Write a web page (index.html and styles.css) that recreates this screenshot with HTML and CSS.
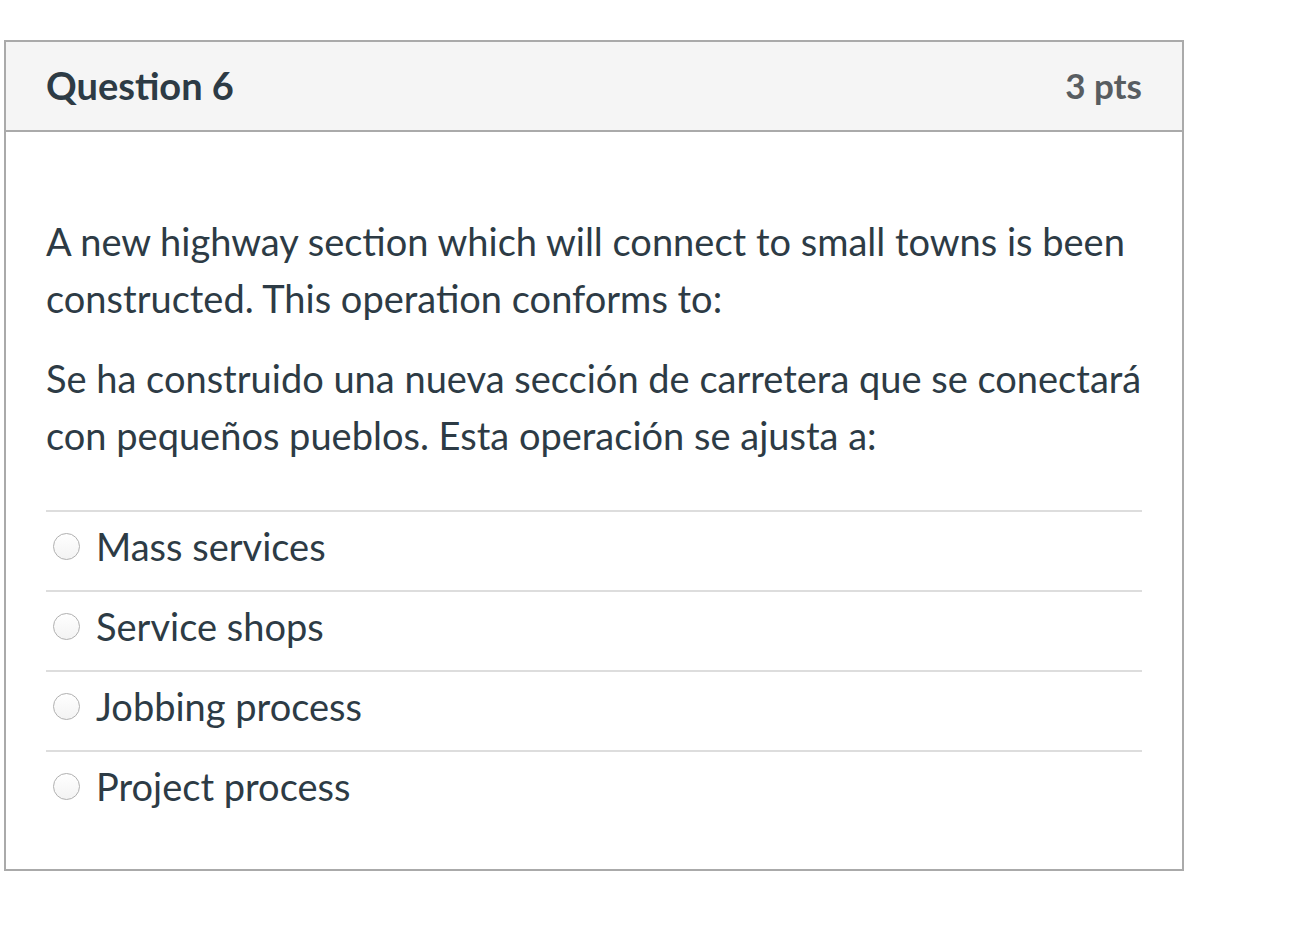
FILE: index.html
```html
<!DOCTYPE html>
<html lang="en">
<head>
<meta charset="utf-8">
<title>Question 6</title>
<link rel="stylesheet" href="styles.css">
</head>
<body>
<div class="question">
  <div class="header">
    <h2 class="title">Question 6</h2>
    <span class="points">3 pts</span>
  </div>
  <div class="content">
    <div class="text">
      <p>A new highway section which will connect to small towns is been constructed. This operation conforms to:</p>
      <p>Se ha construido una nueva sección de carretera que se conectará con pequeños pueblos. Esta operación se ajusta a:</p>
    </div>
    <div class="answers">
      <label class="answer"><span class="radio"></span><span class="label">Mass services</span></label>
      <label class="answer"><span class="radio"></span><span class="label">Service shops</span></label>
      <label class="answer"><span class="radio"></span><span class="label">Jobbing process</span></label>
      <label class="answer"><span class="radio"></span><span class="label">Project process</span></label>
    </div>
  </div>
</div>
</body>
</html>
```
FILE: styles.css
```css
html, body {
  margin: 0;
  padding: 0;
  background: #ffffff;
}
body {
  font-family: Lato, "Open Sans", sans-serif;
  color: #2d3b45;
}
.question {
  margin: 40px 0 0 4px;
  width: 1180px;
  box-sizing: border-box;
  border: 2px solid #aaaaaa;
}
.header {
  height: 90px;
  box-sizing: border-box;
  background: #f5f5f5;
  border-bottom: 2px solid #aaaaaa;
  display: flex;
  align-items: center;
  justify-content: space-between;
  padding: 0 40px 2px 40px;
}
.title {
  margin: 0;
  font-size: 38px;
  font-weight: 700;
  color: #2d3b45;
}
.points {
  font-size: 35px;
  font-weight: 700;
  color: #585d61;
}
.content {
  padding: 81px 36px 39px 40px;
}
.text p {
  margin: 0 0 23px 0;
  font-size: 38px;
  line-height: 57px;
}
.text p:last-child {
  margin-bottom: 0;
}
.answers {
  margin: 46px 4px 0 0;
}
.answer {
  display: flex;
  align-items: center;
  height: 80px;
  box-sizing: border-box;
  border-top: 2px solid #dddddd;
  padding-bottom: 10px;
  font-size: 38px;
}
.radio {
  width: 27px;
  height: 27px;
  box-sizing: border-box;
  border-radius: 50%;
  border: 1.5px solid #b0b0b0;
  background: linear-gradient(#ffffff, #f3f3f3);
  margin: 0 16px 0 7px;
  flex: none;
}
.label {
  line-height: 57px;
}
```
